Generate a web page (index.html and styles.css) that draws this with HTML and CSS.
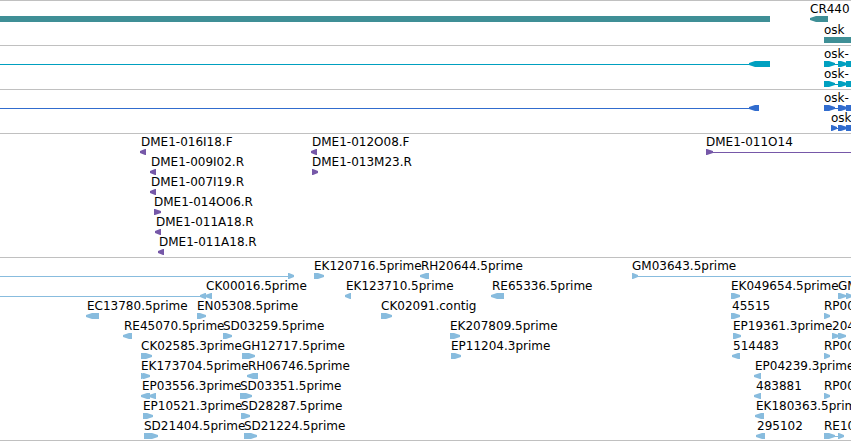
FILE: index.html
```
<!DOCTYPE html>
<html lang="en">
<head>
  <meta charset="UTF-8">
  <title>Genome tracks</title>
  <link rel="stylesheet" href="styles.css">
</head>
<body>
  <main class="browser">
    <section class="track gene" id="gene"></section>
    <section class="track transcript" id="transcript"></section>
    <section class="track cds" id="cds"></section>
    <section class="track bac" id="bac"></section>
    <section class="track est" id="est"></section>
  </main>
  <script src="tracks.js"></script>
</body>
</html>
```

FILE: styles.css
```
body {
  margin: 0;
  background: #fff;
  color: #000;
  font-family: "DejaVu Sans", sans-serif;
  font-size: 12px;
  line-height: 14px;
}
.browser {
  overflow: hidden;
  border-bottom: 1px solid #c0c0c0;
}
.track {
  display: flex;
  flex-direction: column;
  padding: 1px 0 2px;
  border-top: 1px solid #c0c0c0;
}
/* Track colors */
.gene {
  gap: 1px;
  color: #3f8f96;
}
.transcript { color: #00a0c0; }
.cds { color: #316cce; }
.bac { color: #7658a8; }
.est {
  padding-bottom: 1px;
  color: #88bcde;
}
.row {
  position: relative;
  height: 20px;
  overflow: hidden;
}
/* Labels sit at the genomic position of their feature */
.label {
  position: absolute;
  top: 0;
  padding-left: 1px;
  color: #000;
  white-space: nowrap;
}
.glyphs {
  position: absolute;
  left: 0;
  bottom: 0;
  width: 100%;
  height: 6px;
  fill: currentColor;
}
```

FILE: tracks.js
```
// Each row has labels [x, text] and shapes [kind, start, end]
// kinds: L / R = arrow box, B = plain box, - = thin line
const END = 4000;

const tracks = {
  gene: [
    { labels: [[809, 'CR440']], shapes: [['B', 0, 770], ['L', 810, 828]] },
    { labels: [[823, 'osk']], shapes: [['B', 824, END]] }
  ],
  transcript: [
    { labels: [[823, 'osk-']], shapes: [['-', 0, 750], ['L', 749, 770], ['R', 824, 835], ['-', 834, 838], ['R', 838, 847], ['B', 846, END]] },
    { labels: [[823, 'osk-']], shapes: [['R', 824, 835], ['-', 834, 838], ['R', 838, 847], ['B', 846, END]] }
  ],
  cds: [
    { labels: [[823, 'osk-']], shapes: [['-', 0, 750], ['L', 749, 759], ['R', 824, 835], ['-', 834, 838], ['R', 838, 847], ['B', 846, END]] },
    { labels: [[830, 'osk']], shapes: [['R', 831, 837], ['-', 836, 838], ['R', 838, 847], ['B', 846, END]] }
  ],
  bac: [
    { labels: [[140, 'DME1-016I18.F'], [311, 'DME1-012O08.F'], [705, 'DME1-011O14']],
      shapes: [['L', 140, 146], ['L', 311, 317], ['R', 706, 713], ['-', 712, END]] },
    { labels: [[150, 'DME1-009I02.R'], [311, 'DME1-013M23.R']], shapes: [['L', 150, 156], ['R', 312, 318]] },
    { labels: [[150, 'DME1-007I19.R']], shapes: [['L', 150, 156]] },
    { labels: [[153, 'DME1-014O06.R']], shapes: [['R', 154, 161]] },
    { labels: [[155, 'DME1-011A18.R']], shapes: [['L', 155, 161]] },
    { labels: [[158, 'DME1-011A18.R']], shapes: [['L', 158, 164]] }
  ],
  est: [
    { labels: [[313, 'EK120716.5prime'], [420, 'RH20644.5prime'], [631, 'GM03643.5prime']],
      shapes: [['-', 0, 289], ['R', 288, 294], ['R', 314, 324], ['L', 420, 429], ['R', 632, 638], ['-', 637, END]] },
    { labels: [[205, 'CK00016.5prime'], [345, 'EK123710.5prime'], [491, 'RE65336.5prime'], [730, 'EK049654.5prime'], [837, 'GM']],
      shapes: [['-', 0, 202], ['L', 200, 206], ['L', 205, 212], ['L', 345, 351], ['L', 491, 504], ['R', 731, 740], ['R', 838, 846], ['R', 846, 852]] },
    { labels: [[86, 'EC13780.5prime'], [196, 'EN05308.5prime'], [380, 'CK02091.contig'], [731, '45515'], [823, 'RP00']],
      shapes: [['L', 86, 99], ['R', 197, 206], ['R', 381, 392], ['R', 731, 740], ['R', 824, 830]] },
    { labels: [[123, 'RE45070.5prime'], [222, 'SD03259.5prime'], [449, 'EK207809.5prime'], [732, 'EP19361.3prime'], [831, '204']],
      shapes: [['L', 123, 132], ['R', 223, 232], ['R', 450, 460], ['R', 733, 741], ['R', 832, 839], ['R', 838, 846]] },
    { labels: [[140, 'CK02585.3prime'], [241, 'GH12717.5prime'], [450, 'EP11204.3prime'], [732, '514483'], [823, 'RP00']],
      shapes: [['R', 141, 152], ['R', 242, 255], ['R', 451, 461], ['L', 732, 740], ['R', 824, 830]] },
    { labels: [[140, 'EK173704.5prime'], [247, 'RH06746.5prime'], [754, 'EP04239.3prime']],
      shapes: [['R', 141, 146], ['R', 143, 150], ['L', 247, 258], ['L', 754, 761]] },
    { labels: [[141, 'EP03556.3prime'], [239, 'SD03351.5prime'], [755, '483881'], [823, 'RP00']],
      shapes: [['L', 141, 150], ['L', 149, 156], ['R', 240, 252], ['L', 754, 761], ['R', 824, 830]] },
    { labels: [[142, 'EP10521.3prime'], [240, 'SD28287.5prime'], [755, 'EK180363.5prime']],
      shapes: [['R', 143, 153], ['R', 241, 250], ['L', 755, 764]] },
    { labels: [[143, 'SD21404.5prime'], [243, 'SD21224.5prime'], [756, '295102'], [823, 'RE10']],
      shapes: [['R', 144, 158], ['R', 244, 257], ['L', 756, 765], ['R', 824, 835], ['-', 833, 839], ['R', 838, 844]] }
  ]
};

// Arrow heads have a blunt 2px tip
function shapePath(kind, start, end) {
  const head = Math.min(6, end - start - 1);
  if (kind === '-') return `M${start} 3H${end}V4H${start}Z`;
  if (kind === 'B') return `M${start} 0H${end}V6H${start}Z`;
  if (kind === 'L') return `M${start} 2L${start + head} 0H${end}V6H${start + head}L${start} 4Z`;
  return `M${start} 0H${end - head}L${end} 2V4L${end - head} 6H${start}Z`;
}

function drawRow(row) {
  const div = document.createElement('div');
  div.className = 'row';
  const paths = row.shapes.map(s => `<path d="${shapePath(...s)}"/>`).join('');
  const labels = row.labels.map(([x, text]) => `<span class="label" style="left:${x}px">${text}</span>`).join('');
  div.innerHTML = `<svg class="glyphs" aria-hidden="true">${paths}</svg>${labels}`;
  return div;
}

for (const id in tracks) {
  const track = document.getElementById(id);
  tracks[id].forEach(row => track.appendChild(drawRow(row)));
}
```
